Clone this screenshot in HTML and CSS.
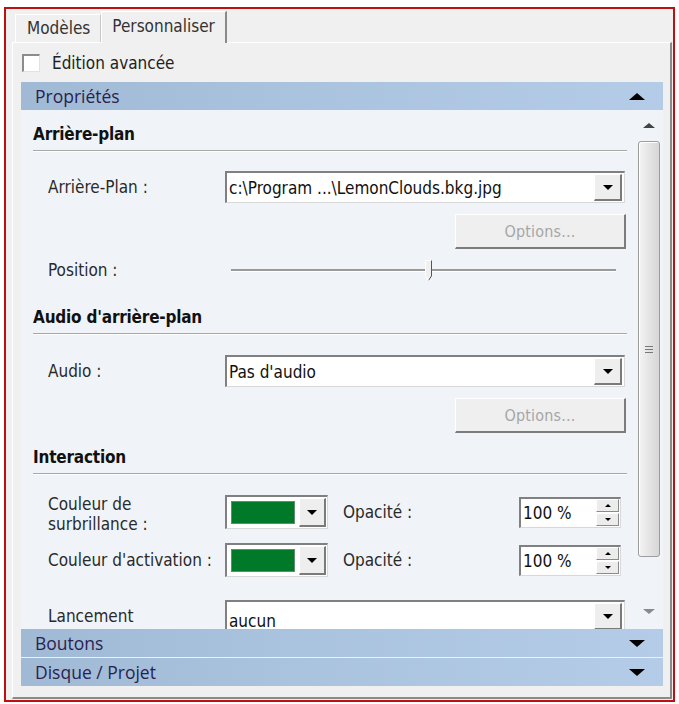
FILE: index.html
```html
<!DOCTYPE html>
<html lang="fr">
<head>
<meta charset="utf-8">
<title>Personnaliser</title>
<link rel="stylesheet" href="styles.css">
</head>
<body>
<div class="frame">
  <div class="tabs">
    <div class="tab">Modèles</div>
    <div class="tab active">Personnaliser</div>
  </div>
  <div class="panel">
    <div class="check"><span class="box"></span><span>Édition avancée</span></div>
    <div class="accordion">
      <div class="acc-head"><span>Propriétés</span><span class="tri up"></span></div>
      <div class="acc-body">
        <div class="content">
          <div class="section">Arrière-plan</div>
          <div class="row r-combo1">
            <span class="lbl">Arrière-Plan :</span>
            <div class="combo"><span class="val">c:\Program ...\LemonClouds.bkg.jpg</span><span class="drop"><span class="arrow"></span></span></div>
          </div>
          <div class="btnrow"><div class="opt">Options...</div></div>
          <div class="row r-slider">
            <span class="lbl">Position :</span>
            <div class="slider">
              <span class="track"></span>
              <svg class="thumb" width="9" height="22" viewBox="0 0 9 22"><path d="M1.5 0.5 H7.5 V16 L4.5 20.5 L1.5 16 Z" fill="#f0f0f0" stroke="none"/><path d="M1.5 16 V0.5 H7.5" fill="none" stroke="#ffffff"/><path d="M7.5 0.5 V16 L4.5 20.5" fill="none" stroke="#555"/><path d="M1.5 16 L4.5 20.5" fill="none" stroke="#fff"/></svg>
            </div>
          </div>
          <div class="section s2">Audio d'arrière-plan</div>
          <div class="row r-combo2">
            <span class="lbl">Audio :</span>
            <div class="combo"><span class="val">Pas d'audio</span><span class="drop"><span class="arrow"></span></span></div>
          </div>
          <div class="btnrow"><div class="opt">Options...</div></div>
          <div class="section s3">Interaction</div>
          <div class="row r-color1">
            <span class="lbl two"><span class="ln">Couleur de</span><span class="ln">surbrillance :</span></span>
            <div class="ccombo"><span class="swatch"></span><span class="drop"><span class="arrow"></span></span></div>
            <span class="lbl2">Opacité :</span>
            <div class="spin"><span class="val">100 %</span><span class="spinbtns"><span class="sb"><span class="mini up"></span></span><span class="sb"><span class="mini down"></span></span></span></div>
          </div>
          <div class="row r-color2">
            <span class="lbl">Couleur d'activation :</span>
            <div class="ccombo"><span class="swatch"></span><span class="drop"><span class="arrow"></span></span></div>
            <span class="lbl2">Opacité :</span>
            <div class="spin"><span class="val">100 %</span><span class="spinbtns"><span class="sb"><span class="mini up"></span></span><span class="sb"><span class="mini down"></span></span></span></div>
          </div>
          <div class="row r-launch">
            <span class="lbl">Lancement</span>
            <div class="combo"><span class="val low">aucun</span><span class="drop"><span class="arrow"></span></span></div>
          </div>
        </div>
        <div class="vscroll">
          <span class="sarrow up"></span>
          <div class="sthumb"><span class="grip"></span></div>
          <span class="sarrow down"></span>
        </div>
      </div>
      <div class="acc-head"><span>Boutons</span><span class="tri down"></span></div>
      <div class="acc-head gap"><span>Disque / Projet</span><span class="tri down"></span></div>
    </div>
  </div>
</div>
</body>
</html>
```

FILE: styles.css
```css
* { box-sizing: border-box; }
body {
  margin: 0;
  background: #ffffff;
  font-family: "DejaVu Sans Condensed", "DejaVu Sans", sans-serif;
  font-size: 17px;
  color: #222222;
}
.frame {
  margin: 7px 0 0 4px;
  width: 671px;
  height: 695px;
  border: 2px solid #bd1111;
  background: #f0f0f0;
  padding: 0 0 0 6px;
}
.tabs {
  display: flex;
  align-items: flex-end;
  height: 33px;
  padding-left: 3px;
}
.tab {
  height: 28px;
  padding: 0 10px 0 11px;
  line-height: 26px;
  border: 1px solid #ffffff;
  border-bottom: none;
  border-right: 1px solid #c8c8c8;
  color: #333;
  background: #f0f0f0;
}
.tab.active {
  height: 32px;
  line-height: 28px;
  padding: 0 10px 0 10px;
  border-right: 2px solid #8a8a8a;
  position: relative;
  margin-bottom: -1px;
  z-index: 1;
}
.panel {
  width: 660px;
  height: 657px;
  border-top: 1px solid #ffffff;
  border-left: 1px solid #ffffff;
  border-right: 2px solid #8a8a8a;
  border-bottom: 2px solid #8a8a8a;
  padding: 11px 0 0 8px;
}
.check {
  display: flex;
  align-items: center;
  height: 18px;
  gap: 12px;
  margin-left: 1px;
}
.box {
  width: 18px;
  height: 18px;
  background: #ffffff;
  border-top: 2px solid #8c8c8c;
  border-left: 2px solid #8c8c8c;
  border-right: 1px solid #e2e2e2;
  border-bottom: 1px solid #e2e2e2;
}
.accordion {
  margin-top: 10px;
  width: 642px;
}
.acc-head {
  height: 28px;
  display: flex;
  align-items: center;
  justify-content: space-between;
  padding: 0 18px 0 14px;
  background: linear-gradient(90deg, #a0b9d5 0%, #a9c2dd 40%, #b4cce7 100%);
  color: #2b1f4f;
  font-family: "Open Sans", "DejaVu Sans", sans-serif;
  font-size: 17.5px;
}
.acc-head.gap { margin-top: 1px; }
.tri {
  width: 0;
  height: 0;
  border-left: 8px solid transparent;
  border-right: 8px solid transparent;
}
.tri.up { border-bottom: 7px solid #000; }
.tri.down { border-top: 7px solid #000; }
.acc-body {
  height: 519px;
  overflow: hidden;
  background: #f0f4f9;
  display: flex;
}
.content {
  width: 615px;
  padding: 15px 9px 0 12px;
}
.section {
  font-weight: bold;
  line-height: 18px;
  padding-bottom: 7px;
  border-bottom: 1px solid #a8a8a8;
  box-shadow: 0 1px 0 #ffffff;
  color: #111;
  letter-spacing: -0.2px;
}
.section.s2 { margin-top: 27px; }
.section.s3 { margin-top: 15px; }
.row {
  display: flex;
  align-items: center;
  padding-left: 15px;
}
.lbl {
  width: 177px;
  flex: none;
  color: #2a2a2a;
}
.lbl.two {
  display: flex;
  flex-direction: column;
  align-self: flex-start;
  margin-top: -1px;
}
.lbl.two .ln { display: block; height: 20px; line-height: 20px; }
.r-combo1 { margin-top: 20px; }
.r-combo2 { margin-top: 21px; }
.r-slider { margin-top: 10px; height: 22px; }
.r-color1 { margin-top: 21px; height: 34px; }
.r-color2 { margin-top: 14px; height: 34px; }
.r-launch { margin-top: 23px; }
.combo {
  width: 400px;
  height: 32px;
  background: #ffffff;
  border-top: 2px solid #808080;
  border-left: 2px solid #808080;
  border-right: 1px solid #d8d8d8;
  border-bottom: 1px solid #d8d8d8;
  display: flex;
  align-items: center;
  justify-content: space-between;
  padding-right: 2px;
}
.val {
  padding-left: 2px;
  color: #111;
}
.val.low { margin-top: 8px; }
.drop {
  width: 28px;
  height: 27px;
  background: #eeeeee;
  border-top: 1px solid #ffffff;
  border-left: 1px solid #ffffff;
  border-right: 2px solid #7a7a7a;
  border-bottom: 2px solid #7a7a7a;
  display: flex;
  align-items: center;
  justify-content: center;
}
.arrow {
  width: 0;
  height: 0;
  border-left: 5px solid transparent;
  border-right: 5px solid transparent;
  border-top: 5px solid #000;
}
.btnrow {
  display: flex;
  justify-content: flex-end;
  margin-top: 11px;
  padding-right: 1px;
}
.opt {
  width: 171px;
  height: 35px;
  background: #efefef;
  border-top: 1px solid #ffffff;
  border-left: 1px solid #ffffff;
  border-right: 2px solid #7c7c7c;
  border-bottom: 2px solid #7c7c7c;
  display: flex;
  align-items: center;
  justify-content: center;
  color: #a6a6a6;
  font-size: 16px;
  letter-spacing: 0.2px;
}
.slider {
  width: 385px;
  height: 22px;
  margin-left: 6px;
  position: relative;
}
.track {
  display: block;
  position: absolute;
  left: 0;
  right: 0;
  top: 10px;
  height: 3px;
  border-top: 2px solid #9a9a9a;
  border-bottom: 1px solid #ffffff;
}
.thumb {
  position: absolute;
  left: 193px;
  top: 1px;
}
.ccombo {
  width: 103px;
  height: 34px;
  background: #ffffff;
  border-top: 2px solid #808080;
  border-left: 2px solid #808080;
  border-right: 1px solid #d8d8d8;
  border-bottom: 1px solid #d8d8d8;
  display: flex;
  align-items: center;
  padding: 0 1px 0 4px;
  gap: 4px;
  flex: none;
}
.swatch {
  width: 65px;
  height: 23px;
  background: #007a28;
  border: 1px solid #5e8f6c;
}
.ccombo .drop { width: 27px; height: 29px; }
.lbl2 {
  width: 176px;
  margin-left: 15px;
  flex: none;
  color: #2a2a2a;
}
.spin {
  width: 102px;
  height: 31px;
  background: #ffffff;
  border-top: 2px solid #808080;
  border-left: 2px solid #808080;
  border-right: 1px solid #d8d8d8;
  border-bottom: 1px solid #d8d8d8;
  display: flex;
  align-items: center;
  justify-content: space-between;
  padding-right: 1px;
}
.spinbtns {
  display: flex;
  flex-direction: column;
  gap: 1px;
}
.sb {
  width: 23px;
  height: 13px;
  background: #ececec;
  border-top: 1px solid #ffffff;
  border-left: 1px solid #ffffff;
  border-right: 1px solid #8a8a8a;
  border-bottom: 1px solid #8a8a8a;
  display: flex;
  align-items: center;
  justify-content: center;
}
.mini {
  width: 0;
  height: 0;
  border-left: 3px solid transparent;
  border-right: 3px solid transparent;
}
.mini.up { border-bottom: 3px solid #000; }
.mini.down { border-top: 3px solid #000; }
.vscroll {
  width: 24px;
  padding: 13px 0 0 1px;
  display: flex;
  flex-direction: column;
  align-items: center;
}
.sarrow {
  width: 0;
  height: 0;
  border-left: 6px solid transparent;
  border-right: 6px solid transparent;
}
.sarrow.up { border-bottom: 5px solid #444; }
.sarrow.down { border-top: 5px solid #8a8a8a; margin-top: 52px; }
.sthumb {
  margin-top: 13px;
  width: 22px;
  height: 416px;
  border: 1px solid #9c9c9c;
  border-radius: 3px;
  background: linear-gradient(90deg, #f4f4f4 0%, #e6e6e6 45%, #d6d6d6 100%);
  box-shadow: inset 1px 1px 0 #ffffff;
  display: flex;
  align-items: center;
  justify-content: center;
}
.grip {
  width: 8px;
  height: 7px;
  border-top: 1px solid #777;
  border-bottom: 1px solid #777;
  position: relative;
}
.grip::after {
  content: "";
  position: absolute;
  left: 0;
  right: 0;
  top: 2px;
  border-top: 1px solid #777;
}
```
